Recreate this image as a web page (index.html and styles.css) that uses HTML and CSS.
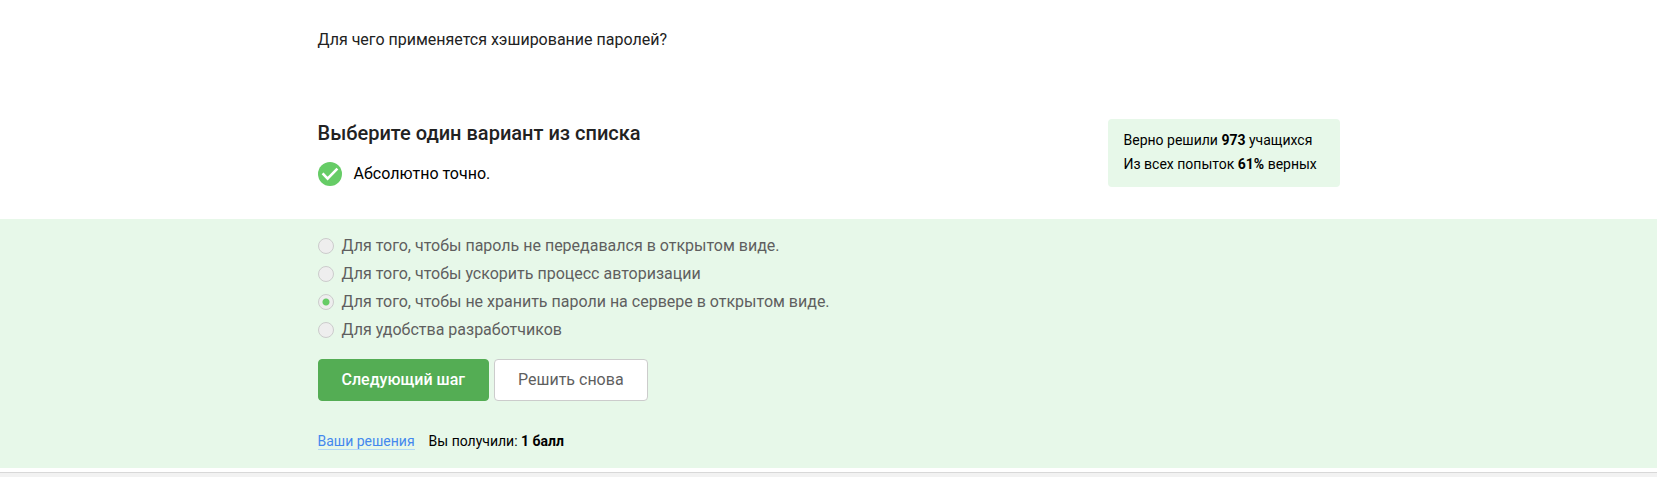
FILE: index.html
```html
<!DOCTYPE html>
<html lang="ru">
<head>
<meta charset="utf-8">
<meta name="viewport" content="width=device-width, initial-scale=1">
<title>Хэширование паролей</title>
<link rel="stylesheet" href="styles.css">
</head>
<body>
<main class="step">
  <div class="container">
    <p class="question">Для чего применяется хэширование паролей?</p>
    <div class="summary">
      <div class="result">
        <h2 class="title">Выберите один вариант из списка</h2>
        <p class="feedback">
          <svg class="feedback-icon" viewBox="0 0 24 24" aria-hidden="true">
            <circle cx="12" cy="12" r="12" fill="#66cc66"/>
            <path d="M4.6 11.4l5 5.2L19.4 6.6" fill="none" stroke="#fff" stroke-width="2.6"/>
          </svg>
          Абсолютно точно.
        </p>
      </div>
      <aside class="stats">
        <p class="stats-line">Верно решили <b>973</b> учащихся</p>
        <p class="stats-line">Из всех попыток <b>61%</b> верных</p>
      </aside>
    </div>
  </div>
  <section class="quiz">
    <form class="container">
      <div class="options" role="radiogroup" aria-label="Варианты ответа">
        <label class="option"><input class="radio" type="radio" name="answer" disabled>Для того, чтобы пароль не передавался в открытом виде.</label>
        <label class="option"><input class="radio" type="radio" name="answer" disabled>Для того, чтобы ускорить процесс авторизации</label>
        <label class="option"><input class="radio" type="radio" name="answer" disabled checked>Для того, чтобы не хранить пароли на сервере в открытом виде.</label>
        <label class="option"><input class="radio" type="radio" name="answer" disabled>Для удобства разработчиков</label>
      </div>
      <div class="actions">
        <button class="button button-primary" type="button">Следующий шаг</button>
        <button class="button button-secondary" type="button">Решить снова</button>
      </div>
      <div class="score">
        <a class="solutions" href="#">Ваши решения</a>
        <span>Вы получили: <b>1 балл</b></span>
      </div>
    </form>
  </section>
</main>
<footer class="footer"></footer>
</body>
</html>
```

FILE: styles.css
```css
* {
  box-sizing: border-box;
}

body {
  display: flex;
  flex-direction: column;
  min-height: 100vh;
  margin: 0;
  background: #fff;
  color: #000;
  font: 16px/24px Roboto, sans-serif;
}

p,
h2 {
  margin: 0;
}

.container {
  max-width: 1022px;
  margin: 0 auto;
}

.question {
  padding: 28px 0 67px;
  color: #222;
}

.summary {
  display: flex;
  justify-content: space-between;
  align-items: flex-start;
  padding-bottom: 32px;
}

.title {
  color: #222;
  font-size: 20px;
  font-weight: 500;
  line-height: 28px;
}

.feedback {
  display: flex;
  align-items: center;
  gap: 12px;
  padding-top: 15px;
}

.feedback-icon {
  width: 24px;
  height: 24px;
}

.stats {
  min-width: 232px;
  padding: 9px 16px 11px;
  border-radius: 4px;
  background: #e7f8e9;
  font-size: 14px;
}

.quiz {
  padding: 13px 0 18px;
  background: #e7f8e9;
}

.option {
  display: flex;
  align-items: center;
  gap: 8px;
  min-height: 28px;
  color: #5f5f5f;
}

.radio {
  appearance: none;
  flex: none;
  width: 16px;
  height: 16px;
  margin: 0;
  border: 1px solid #ccc;
  border-radius: 50%;
  background: #eee;
}

.radio:checked {
  background: radial-gradient(circle, #66cc66 3px, #eee 4px);
}

.actions {
  display: flex;
  gap: 5px;
  padding-top: 15px;
}

.button {
  padding: 8px 23px;
  border: 1px solid #ccc;
  border-radius: 4px;
  font: 16px/24px Roboto, sans-serif;
}

.button-primary {
  border-color: #54ad54;
  background: #54ad54;
  color: #fff;
  font-weight: 500;
}

.button-secondary {
  background: #fff;
  color: #5f5f5f;
}

.score {
  display: flex;
  align-items: baseline;
  gap: 14px;
  padding-top: 32px;
  font-size: 14px;
  line-height: 16px;
}

.solutions {
  border-bottom: 1px solid #b3d9f5;
  color: #4488ee;
  text-decoration: none;
}

.footer {
  flex: 1;
  margin-top: 4px;
  border-top: 1px solid #d8d8d8;
  background: #f2f2f2;
}
```
